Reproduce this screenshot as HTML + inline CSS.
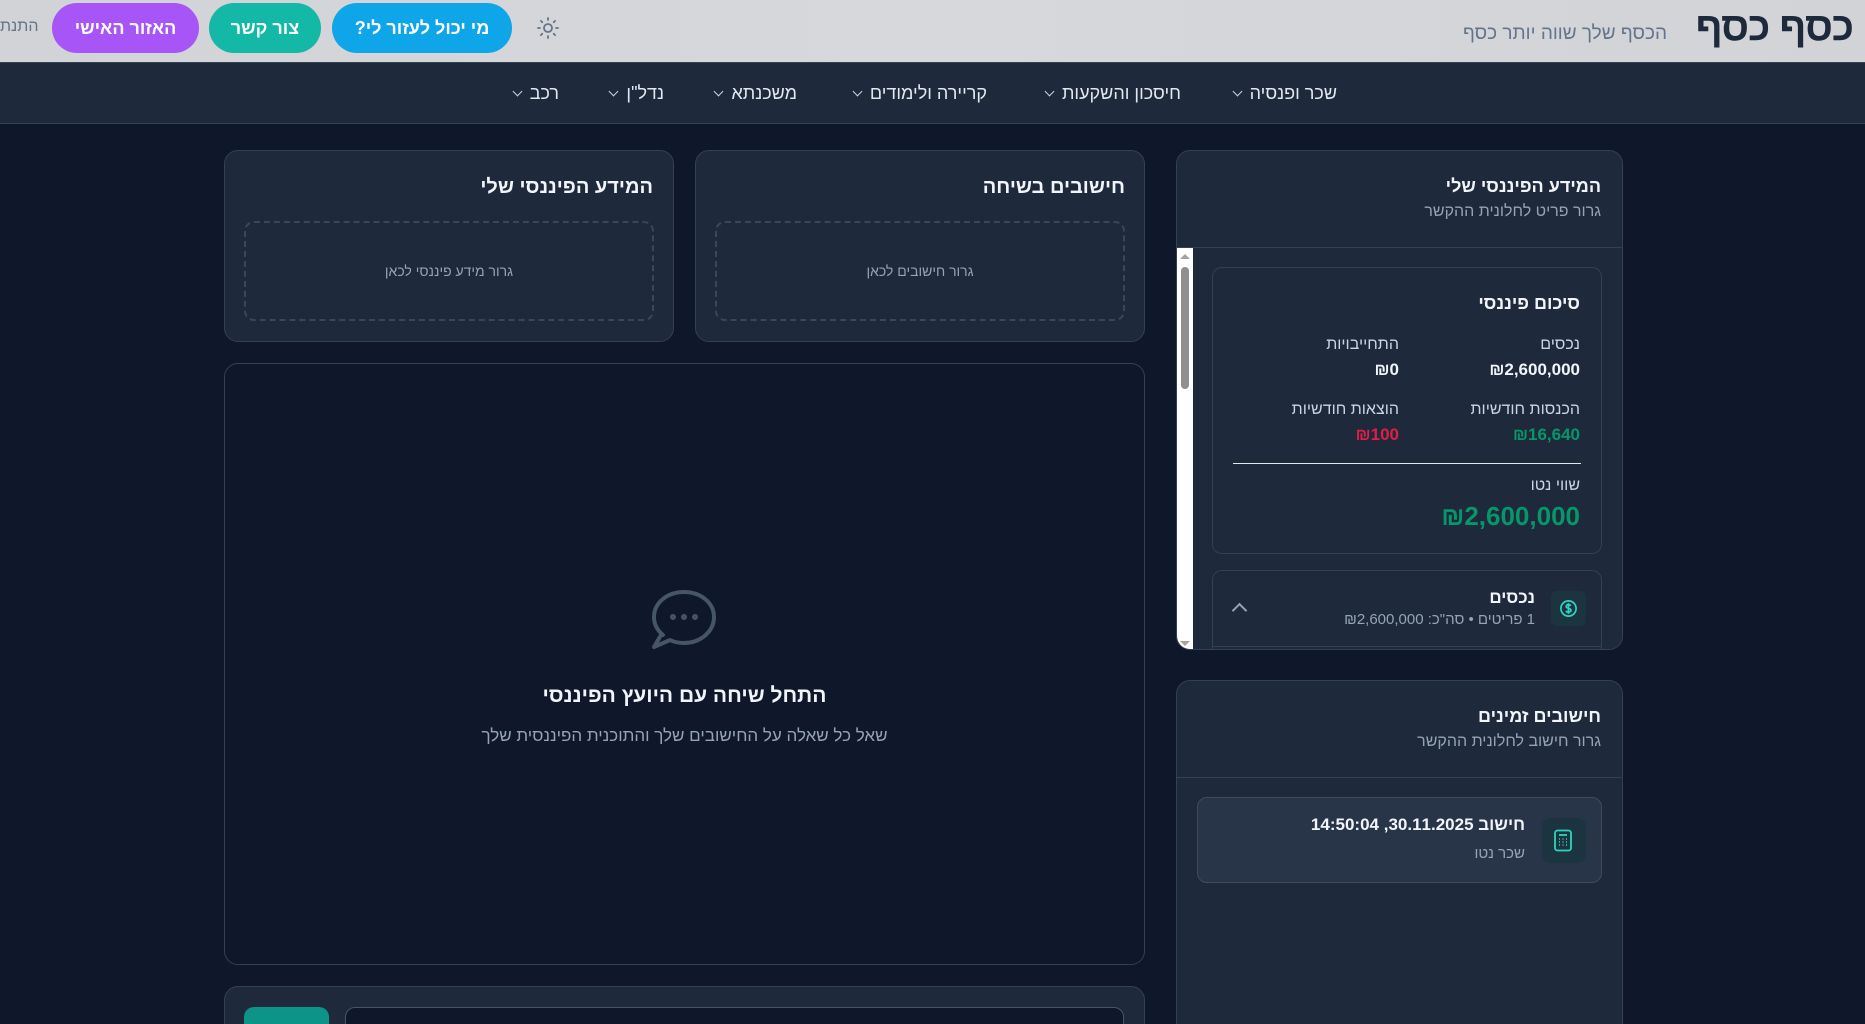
<!DOCTYPE html>
<html lang="he" dir="rtl"><head><meta charset="utf-8">
<style>
*{box-sizing:border-box;margin:0;padding:0}
html,body{width:1865px;height:1024px;overflow:hidden}
body{background:#0f172a;font-family:"Liberation Sans","DejaVu Sans",sans-serif;color:#f1f5f9}
#w{position:relative;width:1865px;height:1024px;overflow:hidden}
.a{position:absolute}
.hdr{left:0;top:0;width:1865px;height:62px;background:linear-gradient(90deg,#d1d3d7,#d6d8dc 50%,#d1d3d7)}
.nav{left:0;top:62px;width:1865px;height:62px;background:#1e293b;border-bottom:1px solid #334155;border-top:1px solid #334155}
.btn{top:3px;height:50px;border-radius:25px;color:#fff;font-weight:bold;font-size:18px;display:flex;align-items:center;justify-content:center}
.card{background:#1e293b;border:1px solid #334155;border-radius:14px}
.t{white-space:nowrap;direction:rtl}
.nv{top:83px;font-size:18px;color:#e2e8f0}
.nv:after{content:"";display:inline-block;width:6px;height:6px;border-right:1.5px solid #cbd5e1;border-bottom:1.5px solid #cbd5e1;transform:rotate(45deg);margin-right:9px;position:relative;top:-4px}
.drop{border:2px dashed #3b4658;border-radius:10px;display:flex;align-items:center;justify-content:center;color:#94a3b8;font-size:14px}
</style></head><body><div id="w">
<div class="a hdr"></div>
<div class="a t" style="right:12px;top:5px;font-size:40px;font-weight:bold;color:#1e293b;letter-spacing:-1px">כסף כסף</div>
<div class="a t" style="right:198px;top:23px;font-size:19px;color:#64748b">הכסף שלך שווה יותר כסף</div>
<div class="a t" style="left:0;top:18px;font-size:16px;color:#64748b;width:42px;overflow:hidden;direction:ltr;text-align:left">התנת</div>
<div class="a btn" style="left:52px;width:147px;background:#a855f7">האזור האישי</div>
<div class="a btn" style="left:209px;width:112px;background:#14b8a6">צור קשר</div>
<div class="a btn" style="left:332px;width:180px;background:#0ea5e9">מי יכול לעזור לי?</div>
<svg class="a" style="left:536px;top:16px" width="24" height="24" viewBox="0 0 24 24" fill="none" stroke="#64748b" stroke-width="1.8" stroke-linecap="round"><circle cx="12" cy="12" r="4"/><path d="M12 2v2M12 20v2M4.9 4.9l1.4 1.4M17.7 17.7l1.4 1.4M2 12h2M20 12h2M4.9 19.1l1.4-1.4M17.7 6.3l1.4-1.4"/></svg>
<div class="a nav"></div>
<div class="a t nv" style="right:528px">שכר ופנסיה</div>
<div class="a t nv" style="right:684px">חיסכון והשקעות</div>
<div class="a t nv" style="right:878px">קריירה ולימודים</div>
<div class="a t nv" style="right:1068px">משכנתא</div>
<div class="a t nv" style="right:1201px">נדל"ן</div>
<div class="a t nv" style="right:1306px">רכב</div>

<div class="a card" style="left:695px;top:150px;width:450px;height:192px"></div>
<div class="a t" style="right:740px;top:176px;font-size:20px;font-weight:bold">חישובים בשיחה</div>
<div class="a drop" style="left:715px;top:221px;width:410px;height:100px">גרור חישובים לכאן</div>
<div class="a card" style="left:224px;top:150px;width:450px;height:192px"></div>
<div class="a t" style="right:1212px;top:176px;font-size:20px;font-weight:bold">המידע הפיננסי שלי</div>
<div class="a drop" style="left:244px;top:221px;width:410px;height:100px">גרור מידע פיננסי לכאן</div>

<div class="a" style="left:224px;top:363px;width:921px;height:602px;border:1px solid #334155;border-radius:14px;background:#0f172a"></div>
<svg class="a" style="left:650px;top:589px" width="68" height="62" viewBox="0 0 68 62" fill="none" stroke="#475569" stroke-width="4" stroke-linecap="round" stroke-linejoin="round"><path d="M13 46C7 41 4 35 4 28 4 14 17 3 34 3s30 11 30 25-13 26-30 26c-5 0-10-1-14-3L4 58l7-12"/><circle cx="23" cy="28" r="1" fill="#475569"/><circle cx="34" cy="28" r="1" fill="#475569"/><circle cx="45" cy="28" r="1" fill="#475569"/></svg>
<div class="a t" style="left:224px;width:921px;top:684px;text-align:center;font-size:21px;font-weight:bold">התחל שיחה עם היועץ הפיננסי</div>
<div class="a t" style="left:224px;width:921px;top:726px;text-align:center;font-size:17px;color:#94a3b8">שאל כל שאלה על החישובים שלך והתוכנית הפיננסית שלך</div>
<div class="a card" style="left:224px;top:986px;width:921px;height:80px"></div>
<div class="a" style="left:244px;top:1007px;width:85px;height:40px;background:#0d9488;border-radius:10px"></div>
<div class="a" style="left:345px;top:1007px;width:779px;height:40px;background:#0f172a;border:1px solid #475569;border-radius:10px"></div>

<div class="a card" style="left:1176px;top:150px;width:447px;height:500px;overflow:hidden">
 <div class="a" style="left:0;top:96px;width:100%;border-top:1px solid #334155"></div>
 <div class="a" style="left:0;top:97px;width:16px;height:403px;background:#fff"></div>
 <div class="a" style="left:4px;top:116px;width:8px;height:122px;background:#8f8f8f;border-radius:4px"></div>
 <div class="a" style="left:3px;top:103px;width:0;height:0;border:5px solid transparent;border-bottom-color:#a3a3a3;border-top:0"></div>
 <div class="a" style="left:3px;top:490px;width:0;height:0;border:5px solid transparent;border-top-color:#a3a3a3;border-bottom:0"></div>
</div>
<div class="a t" style="right:264px;top:176px;font-size:18px;font-weight:bold">המידע הפיננסי שלי</div>
<div class="a t" style="right:264px;top:203px;font-size:16px;color:#94a3b8">גרור פריט לחלונית ההקשר</div>
<div class="a" style="left:1212px;top:267px;width:390px;height:287px;border:1px solid #334155;border-radius:10px"></div>
<div class="a t" style="right:285px;top:293px;font-size:18px;font-weight:bold">סיכום פיננסי</div>
<div class="a t" style="right:285px;top:336px;font-size:16px;color:#cbd5e1">נכסים</div>
<div class="a t" style="right:285px;top:360px;font-size:17px;font-weight:bold">₪2,600,000</div>
<div class="a t" style="right:466px;top:336px;font-size:16px;color:#cbd5e1">התחייבויות</div>
<div class="a t" style="right:466px;top:360px;font-size:17px;font-weight:bold">₪0</div>
<div class="a t" style="right:285px;top:401px;font-size:16px;color:#cbd5e1">הכנסות חודשיות</div>
<div class="a t" style="right:285px;top:425px;font-size:17px;font-weight:bold;color:#059669">₪16,640</div>
<div class="a t" style="right:466px;top:401px;font-size:16px;color:#cbd5e1">הוצאות חודשיות</div>
<div class="a t" style="right:466px;top:425px;font-size:17px;font-weight:bold;color:#e11d48">₪100</div>
<div class="a" style="left:1233px;top:463px;width:348px;border-top:1.5px solid #e2e8f0"></div>
<div class="a t" style="right:285px;top:477px;font-size:16px;color:#cbd5e1">שווי נטו</div>
<div class="a t" style="right:285px;top:501px;font-size:26px;font-weight:bold;color:#059669">₪2,600,000</div>
<div class="a" style="left:1212px;top:570px;width:390px;height:80px;border:1px solid #334155;border-bottom:none;border-radius:10px 10px 0 0"></div>
<div class="a" style="left:1213px;top:646px;width:388px;border-top:1px solid #334155"></div>
<div class="a" style="left:1551px;top:591px;width:35px;height:35px;background:#1c3440;border-radius:6px"></div>
<svg class="a" style="left:1559px;top:599px" width="19" height="19" viewBox="0 0 20 20" fill="none" stroke="#2dd4bf" stroke-width="1.8"><circle cx="10" cy="10" r="8"/><path d="M12.5 7.2c-.5-.8-1.4-1.2-2.5-1.2-1.4 0-2.4.8-2.4 1.9 0 2.5 5 1.3 5 4 0 1.1-1.1 1.9-2.6 1.9-1.2 0-2.1-.5-2.6-1.3M10 4.5v11"/></svg>
<div class="a t" style="right:330px;top:588px;font-size:17px;font-weight:bold">נכסים</div>
<div class="a t" style="right:330px;top:611px;font-size:15px;color:#94a3b8">1 פריטים • סה"כ: ₪2,600,000</div>
<div class="a" style="left:1234px;top:605px;width:11px;height:11px;border-left:2px solid #94a3b8;border-top:2px solid #94a3b8;transform:rotate(45deg)"></div>

<div class="a card" style="left:1176px;top:680px;width:447px;height:380px">
 <div class="a" style="left:0;top:96px;width:100%;border-top:1px solid #334155"></div>
</div>
<div class="a t" style="right:264px;top:706px;font-size:18px;font-weight:bold">חישובים זמינים</div>
<div class="a t" style="right:264px;top:733px;font-size:16px;color:#94a3b8">גרור חישוב לחלונית ההקשר</div>
<div class="a" style="left:1197px;top:797px;width:405px;height:86px;background:#283447;border:1px solid #3f4b5e;border-radius:10px"></div>
<div class="a" style="left:1542px;top:818px;width:44px;height:45px;background:#1c3440;border-radius:8px"></div>
<svg class="a" style="left:1553px;top:829px" width="20" height="23" viewBox="0 0 20 23" fill="none" stroke="#2dd4bf" stroke-width="1.8"><rect x="2" y="1.5" width="16" height="20" rx="2.5"/><path d="M6 6h8"/><g stroke-width="1.6"><path d="M6 10h1M9.5 10h1M13 10h1M6 13h1M9.5 13h1M13 13h1M6 16h1M9.5 16h1M13 16h1"/></g></svg>
<div class="a t" style="right:340px;top:815px;font-size:17px;font-weight:bold">חישוב 30.11.2025, 14:50:04</div>
<div class="a t" style="right:340px;top:845px;font-size:15px;color:#94a3b8">שכר נטו</div>
</div></body></html>
